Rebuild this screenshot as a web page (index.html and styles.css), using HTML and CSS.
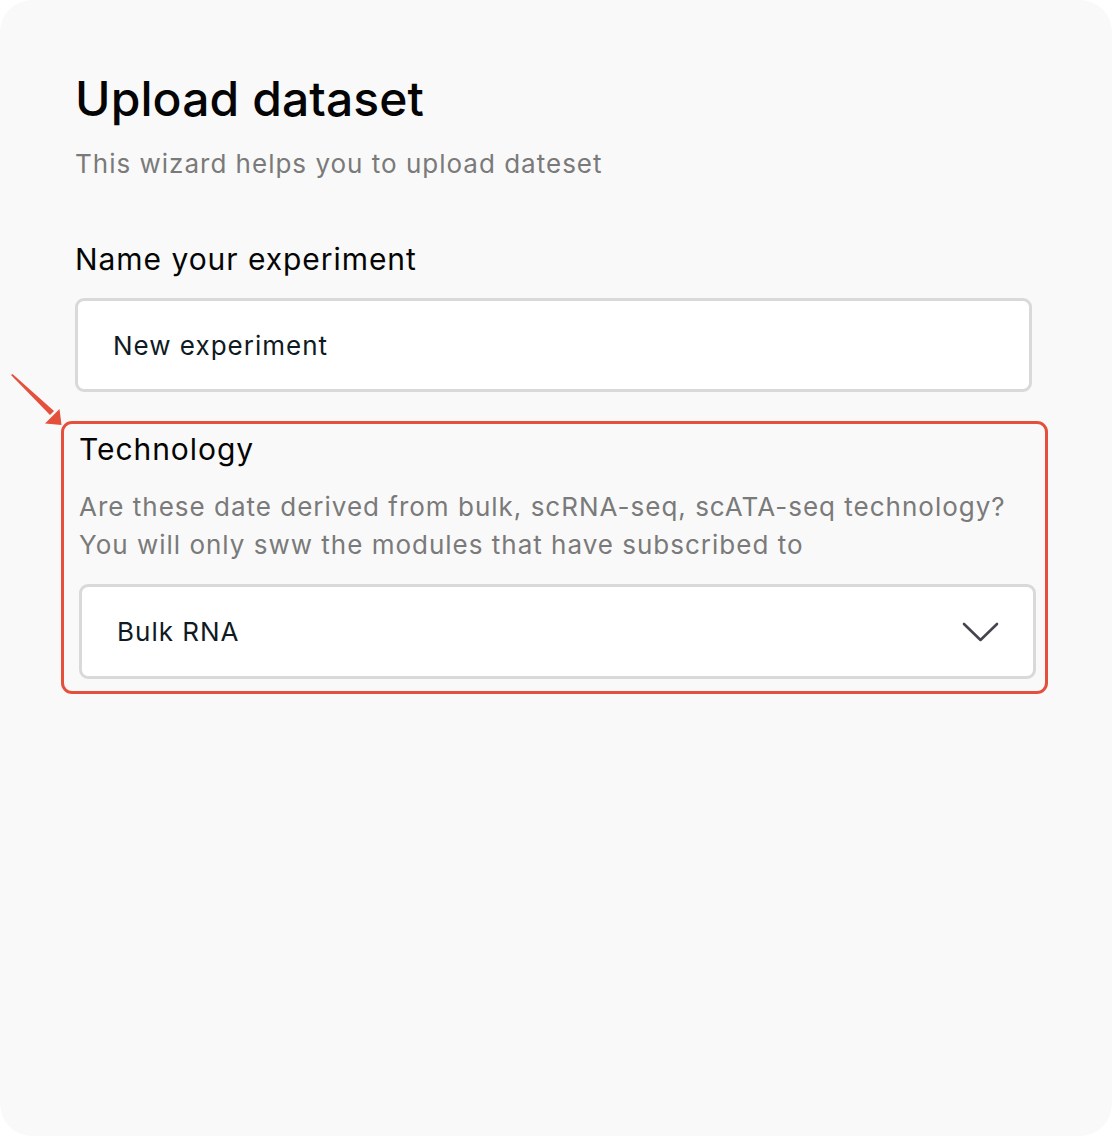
FILE: index.html
```html
<!DOCTYPE html>
<html lang="en">
<head>
<meta charset="utf-8">
<title>Upload dataset</title>
<link rel="stylesheet" href="styles.css">
</head>
<body>
<main class="card">
  <svg class="pointer" width="70" height="70" viewBox="0 0 70 70" aria-hidden="true">
    <polygon points="11,15 12.5,14 54,51 50,55" fill="#e5503c"/>
    <polygon points="45,63.5 59.5,49 61.5,65" fill="#e5503c"/>
  </svg>
  <h1 class="title">Upload dataset</h1>
  <p class="subtitle">This wizard helps you to upload dateset</p>

  <section class="field">
    <label class="field-label" for="exp">Name your experiment</label>
    <div class="input-box" id="exp">New experiment</div>
  </section>

  <section class="highlight">
    <h2 class="field-label">Technology</h2>
    <p class="help">Are these date derived from bulk, scRNA-seq, scATA-seq technology?<br>You will only sww the modules that have subscribed to</p>
    <div class="select-box">
      <span>Bulk RNA</span>
      <svg class="chevron" width="38" height="22" viewBox="0 0 38 22" aria-hidden="true">
        <polyline points="2,3 18.5,19 35,3" fill="none" stroke="#45464d" stroke-width="2.6" stroke-linecap="round" stroke-linejoin="round"/>
      </svg>
    </div>
  </section>
</main>
</body>
</html>
```
FILE: styles.css
```css
html, body {
  margin: 0;
  padding: 0;
  background: #ffffff;
}
body {
  font-family: Inter, "Noto Sans", sans-serif;
}
.card {
  position: relative;
  box-sizing: border-box;
  width: 1112px;
  height: 1136px;
  background: #f9f9f9;
  border-radius: 32px;
  padding: 70px 0 0 75px;
}
.pointer {
  position: absolute;
  left: 0;
  top: 360px;
}
.title {
  margin: 0;
  font-size: 48px;
  line-height: 58px;
  font-weight: 500;
  letter-spacing: 0.1px;
  color: #050505;
}
.subtitle {
  margin: 20px 0 0;
  font-size: 26px;
  line-height: 32px;
  letter-spacing: 1px;
  color: #7a7a7a;
}
.field {
  margin-top: 61px;
  width: 957px;
}
.field-label {
  display: block;
  margin: 0;
  font-size: 30px;
  line-height: 36px;
  font-weight: 400;
  letter-spacing: 0.95px;
  color: #050505;
}
.input-box {
  box-sizing: border-box;
  margin-top: 21px;
  height: 94px;
  background: #ffffff;
  border: 3px solid #d9d9d9;
  border-radius: 9px;
  padding-left: 35px;
  display: flex;
  align-items: center;
  font-size: 26px;
  letter-spacing: 1px;
  color: #0f1a22;
}
.highlight {
  box-sizing: border-box;
  margin: 29px 0 0 -14px;
  width: 987px;
  height: 273px;
  border: 3px solid #e5503c;
  border-radius: 11px;
  padding: 7px 0 0 15px;
}
.help {
  margin: 21px 0 0;
  font-size: 26px;
  line-height: 38px;
  letter-spacing: 1px;
  color: #7a7a7a;
}
.select-box {
  box-sizing: border-box;
  margin-top: 20px;
  width: 957px;
  height: 95px;
  background: #ffffff;
  border: 3px solid #d9d9d9;
  border-radius: 9px;
  padding: 0 33px 0 35px;
  display: flex;
  align-items: center;
  justify-content: space-between;
  font-size: 26px;
  letter-spacing: 1px;
  color: #0f1a22;
}
```
